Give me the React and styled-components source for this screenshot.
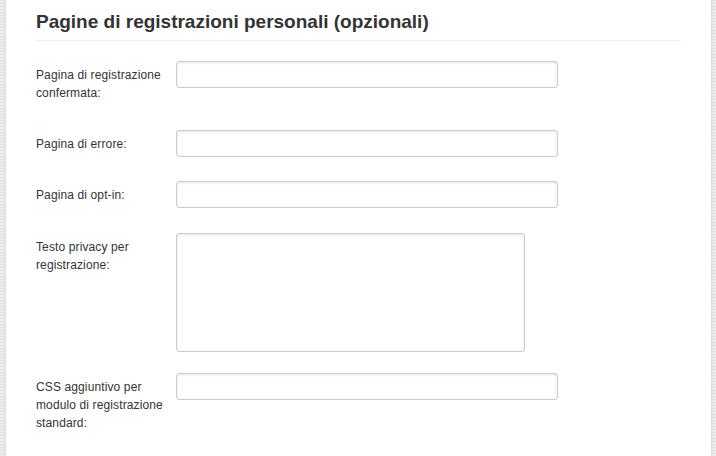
import React from "react";
import styled, { createGlobalStyle } from "styled-components";

const Global = createGlobalStyle`
  html, body { margin: 0; padding: 0; }
  body {
    background-color: #e8e8e8;
    background-image: repeating-linear-gradient(0deg, #ececec 0px, #ececec 2px, #e2e2e2 2px, #e2e2e2 3px);
    font-family: "Liberation Sans", Arial, sans-serif;
    height: 456px;
    overflow: hidden;
  }
`;

const Page = styled.div`
  display: flex;
  padding: 0 5px 0 6px;
  height: 456px;
`;

const Panel = styled.section`
  flex: 1;
  background: #fff;
  box-shadow: 0 0 3px rgba(0, 0, 0, 0.12);
  padding: 0 30px 0 30px;
`;

const Title = styled.h2`
  margin: 0;
  padding: 11px 0 7px;
  font-size: 19px;
  line-height: 22px;
  font-weight: bold;
  color: #333;
  border-bottom: 1px solid #eeeeee;
`;

const Form = styled.form`
  display: flex;
  flex-direction: column;
  padding-top: 20px;
`;

const Row = styled.div`
  display: flex;
  align-items: flex-start;
  margin-bottom: ${(p) => p.$mb}px;
`;

const Label = styled.label`
  width: 140px;
  flex: none;
  padding-top: 5px;
  font-size: 12px;
  line-height: 18px;
  letter-spacing: 0.12px;
  color: #333;
`;

const Input = styled.input`
  box-sizing: border-box;
  width: 382px;
  height: 27px;
  margin: 0;
  border: 1px solid #cccccc;
  border-radius: 3px;
  box-shadow: inset 0 1px 3px rgba(0, 0, 0, 0.1);
  background: #fff;
  font-family: inherit;
  font-size: 12px;
  padding: 4px 6px;
  outline: none;
`;

const TextArea = styled.textarea`
  box-sizing: border-box;
  width: 349px;
  height: 119px;
  margin: 0;
  border: 1px solid #cccccc;
  border-radius: 3px;
  box-shadow: inset 0 1px 3px rgba(0, 0, 0, 0.1);
  background: #fff;
  font-family: inherit;
  font-size: 12px;
  padding: 4px 6px;
  resize: none;
  outline: none;
`;

export default function App() {
  return (
    <>
      <Global />
      <Page>
        <Panel>
          <Title>Pagine di registrazioni personali (opzionali)</Title>
          <Form>
            <Row $mb={28}>
              <Label>Pagina di registrazione<br />confermata:</Label>
              <Input type="text" />
            </Row>
            <Row $mb={24}>
              <Label>Pagina di errore:</Label>
              <Input type="text" />
            </Row>
            <Row $mb={25}>
              <Label>Pagina di opt-in:</Label>
              <Input type="text" />
            </Row>
            <Row $mb={21}>
              <Label>Testo privacy per<br />registrazione:</Label>
              <TextArea />
            </Row>
            <Row $mb={0}>
              <Label>CSS aggiuntivo per<br />modulo di registrazione<br />standard:</Label>
              <Input type="text" />
            </Row>
          </Form>
        </Panel>
      </Page>
    </>
  );
}
